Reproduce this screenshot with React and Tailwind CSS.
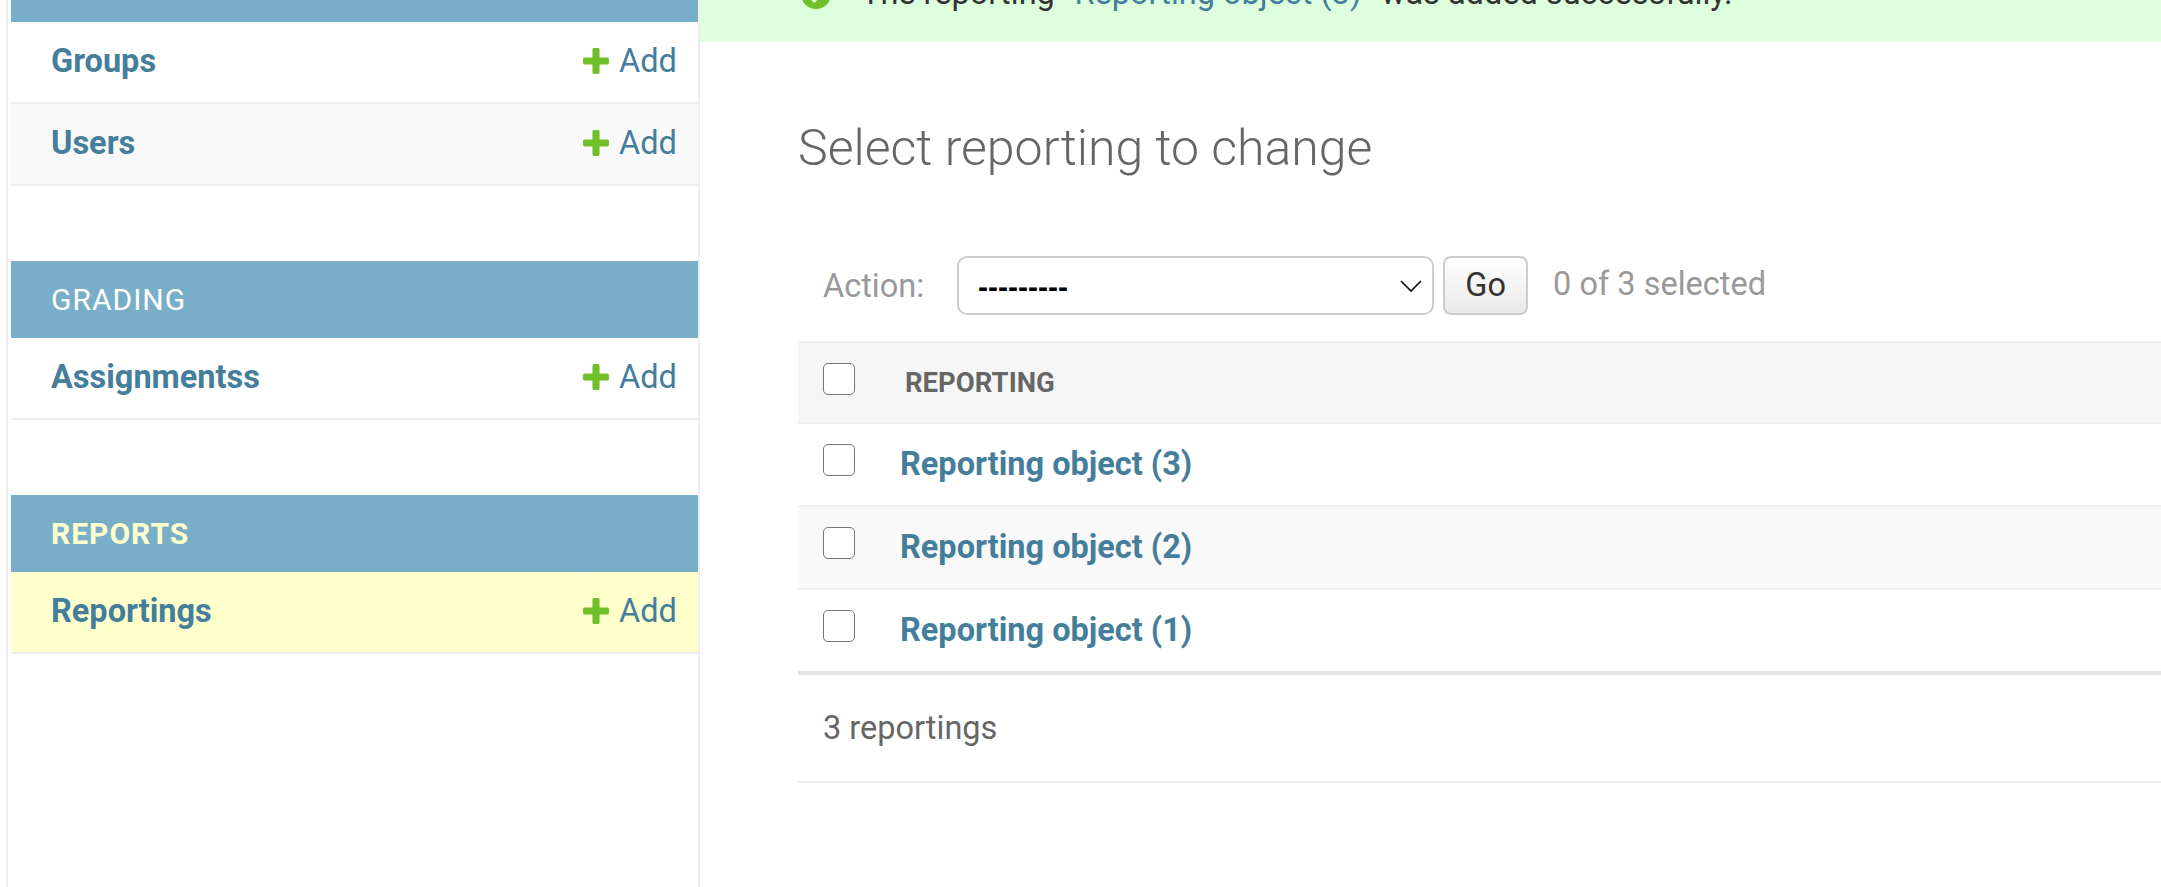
import React from 'react';

const addPath = 'M1600 796v192q0 40-28 68t-68 28h-416v416q0 40-28 68t-68 28h-192q-40 0-68-28t-28-68v-416h-416q-40 0-68-28t-28-68v-192q0-40 28-68t68-28h416v-416q0-40 28-68t68-28h192q40 0 68 28t28 68v416h416q40 0 68 28t28 68z';
const yesPath = 'M1412 734q0-28-18-46l-91-90q-19-19-45-19t-45 19l-408 407-226-226q-19-19-45-19t-45 19l-91 90q-18 18-18 46 0 27 18 45l362 362q19 19 45 19 27 0 46-19l543-543q18-18 18-45zm252 162q0 209-103 385.500t-279.500 279.500-385.500 103-385.500-103-279.500-279.500-103-385.500 103-385.500 279.500-279.500 385.500-103 385.500 103 279.500 279.500 103 385.500z';

function Checkbox() {
  return <input type="checkbox" className="appearance-none w-8 h-8 m-0 mt-5 bg-white border-[1.5px] border-[#767676] rounded-[5px]" />;
}

function ModelRow({ name, bg }) {
  return (
    <div className={`flex h-[82px] border-b-2 border-[#eeeeee] ${bg}`}>
      <a className="flex-1 flex items-center pl-10 pb-[1px] text-[32.5px] font-bold text-[#447e9b]">{name}</a>
      <div className="w-[138px] flex items-center pl-[22px] gap-[10px] pb-[1px] text-[32.5px] text-[#447e9b] border-l border-white/30">
        <svg viewBox="192 192 1408 1408" className="w-[26px] h-[26px] -mt-[2px]"><path fill="#70bf2b" d={addPath} /></svg>
        <span>Add</span>
      </div>
    </div>
  );
}

function AppGroup({ title, active, children }) {
  return (
    <div className="mb-[75px]">
      <div className={`h-[77px] flex items-center pl-10 bg-[#79aec8] text-[30px] tracking-[1px] ${active ? 'font-bold text-[#ffffcc]' : 'text-white'}`}>
        {title}
      </div>
      {children}
    </div>
  );
}

function ResultRow({ label, bg, last }) {
  return (
    <div className={`flex pl-[25px] ${bg} ${last ? 'h-[85px] border-b-4 border-[#e4e4e4]' : 'h-[83px] border-b-2 border-[#eeeeee]'}`}>
      <Checkbox />
      <a className="ml-[45px] -mt-[1px] self-center text-[32.5px] font-bold text-[#447e9b]">{label}</a>
    </div>
  );
}

export default function App() {
  return (
    <div className="h-[887px] overflow-hidden bg-white font-[Roboto,sans-serif]">
      <div className="flex -mt-[55px]">
        {/* Sidebar */}
        <aside className="w-[694px] h-[942px] shrink-0 ml-[6px] pl-[3px] border-l-2 border-r-2 border-[#eeeeee]">
          <div className="h-[77px] bg-[#79aec8]" />
          <div className="mb-[75px]">
            <ModelRow name="Groups" bg="bg-white" />
            <ModelRow name="Users" bg="bg-[#f9f9f9]" />
          </div>
          <AppGroup title="GRADING">
            <ModelRow name="Assignmentss" bg="bg-white" />
          </AppGroup>
          <AppGroup title="REPORTS" active>
            <ModelRow name="Reportings" bg="bg-[#ffffcc]" />
          </AppGroup>
        </aside>

        {/* Main */}
        <main className="flex-1 min-w-0">
          <div className="h-[97px] bg-[#ddffdd] pl-[101px] pt-[34px] flex items-start text-[32.5px] leading-[38px] text-[#333333] whitespace-nowrap">
            <svg viewBox="128 128 1536 1536" className="w-[30px] h-[30px] shrink-0"><path fill="#70bf2b" d={yesPath} /></svg>
            <span className="ml-[30px] -mt-[5px]">The reporting “<a className="text-[#447e9b]">Reporting object (3)</a>” was added successfully.</span>
          </div>

          <div className="pl-[98px]">
            <h1 className="mt-[76px] h-[62px] leading-[60px] text-[50px] font-light text-[#666666]">Select reporting to change</h1>

            <div className="mt-[76px] h-[59px] pl-[25px] flex items-center text-[32.5px] text-[#999999]">
              <span className="mt-[2px]">Action:</span>
              <div className="relative ml-[33px] w-[477px] h-[59px]">
                <select className="appearance-none w-full h-full pl-[19px] pt-[2px] rounded-[10px] border-2 border-[#cccccc] bg-white text-[30px] font-bold text-black font-['Liberation_Sans',sans-serif]">
                  <option>---------</option>
                </select>
                <svg viewBox="0 0 22 12" className="absolute right-[12px] top-[24px] w-[22px] h-[12px]" fill="none" stroke="#111111" strokeWidth="1.7">
                  <path d="M1 1l10 10L21 1" />
                </svg>
              </div>
              <button className="ml-[9px] w-[85px] h-[59px] rounded-[8px] border-2 border-[#cccccc] bg-gradient-to-b from-white to-[#e8e8e8] text-[32.5px] text-[#333333]">Go</button>
              <span className="ml-[25px] -mt-[3px]">0 of 3 selected</span>
            </div>

            {/* Results table */}
            <div className="mt-[26px]">
              <div className="flex pl-[25px] h-[83px] bg-[#f6f6f6] border-y-2 border-[#eeeeee]">
                <Checkbox />
                <span className="ml-[50px] self-center text-[27.5px] font-bold text-[#666666]">REPORTING</span>
              </div>
              <ResultRow label="Reporting object (3)" bg="bg-white" />
              <ResultRow label="Reporting object (2)" bg="bg-[#f9f9f9]" />
              <ResultRow label="Reporting object (1)" bg="bg-white" last />
              <div className="h-[108px] pl-[25px] flex items-center border-b-2 border-[#eeeeee] text-[32.5px] text-[#666666]">3 reportings</div>
            </div>
          </div>
        </main>
      </div>
    </div>
  );
}
